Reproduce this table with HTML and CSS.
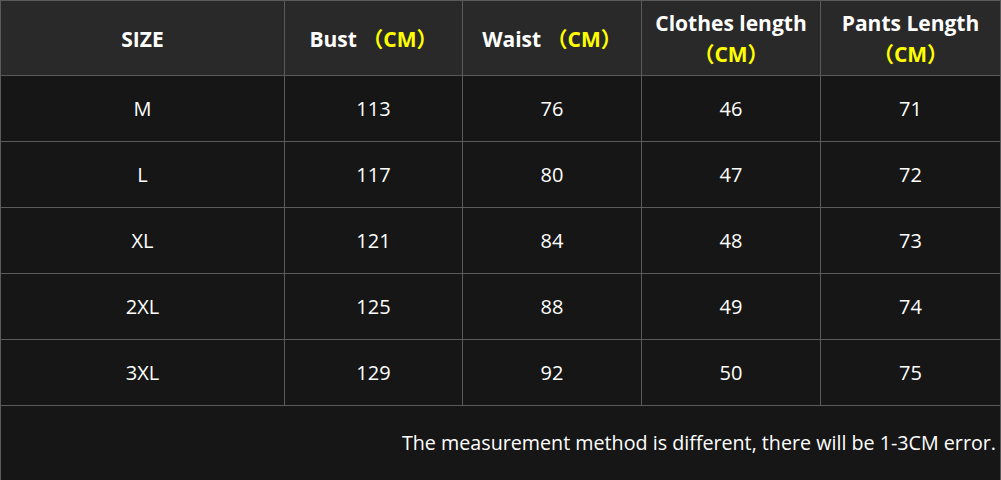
FILE: index.html
```html
<!DOCTYPE html>
<html>
<head>
<meta charset="utf-8">
<link rel="stylesheet" href="styles.css">
</head>
<body>
<div class="chart">
  <div class="grid">
    <div class="cell head"><div>SIZE</div></div>
    <div class="cell head"><div>Bust <span class="unit">（CM）</span></div></div>
    <div class="cell head"><div>Waist <span class="unit">（CM）</span></div></div>
    <div class="cell head"><div>Clothes length<br><span class="unit">（CM）</span></div></div>
    <div class="cell head"><div>Pants Length<br><span class="unit">（CM）</span></div></div>

    <div class="cell">M</div><div class="cell">113</div><div class="cell">76</div><div class="cell">46</div><div class="cell">71</div>
    <div class="cell">L</div><div class="cell">117</div><div class="cell">80</div><div class="cell">47</div><div class="cell">72</div>
    <div class="cell">XL</div><div class="cell">121</div><div class="cell">84</div><div class="cell">48</div><div class="cell">73</div>
    <div class="cell">2XL</div><div class="cell">125</div><div class="cell">88</div><div class="cell">49</div><div class="cell">74</div>
    <div class="cell">3XL</div><div class="cell">129</div><div class="cell">92</div><div class="cell">50</div><div class="cell">75</div>
  </div>
  <div class="note">The measurement method is different, there will be 1-3CM error.</div>
</div>
</body>
</html>
```
FILE: styles.css
```css
html, body {
  margin: 0;
  padding: 0;
  background: #000;
}
.chart {
  width: 1001px;
  height: 480px;
  box-sizing: border-box;
  background: #161616;
  border-left: 1px solid #5a5a5a;
  border-top: 1px solid #5a5a5a;
  border-right: 1px solid #5a5a5a;
  font-family: "Open Sans", "Noto Sans CJK SC", sans-serif;
  color: #fff;
  display: flex;
  flex-direction: column;
}
.grid {
  display: grid;
  grid-template-columns: 284px 178px 179px 179px 179px;
  grid-template-rows: 75px repeat(5, 66px);
}
.cell {
  display: flex;
  align-items: center;
  justify-content: center;
  text-align: center;
  font-size: 20px;
  border-right: 1px solid #5a5a5a;
  border-bottom: 1px solid #5a5a5a;
  box-sizing: border-box;
}
.cell:nth-child(5n) {
  border-right: none;
}
.head {
  background: #292929;
  font-weight: 700;
  font-size: 21px;
  line-height: 31px;
  padding-top: 2px;
  white-space: nowrap;
}
.unit {
  color: #ffff00;
}
.note {
  flex: 1;
  display: flex;
  align-items: center;
  justify-content: flex-end;
  padding-right: 4px;
  padding-bottom: 2px;
  font-size: 19.7px;
}
```
